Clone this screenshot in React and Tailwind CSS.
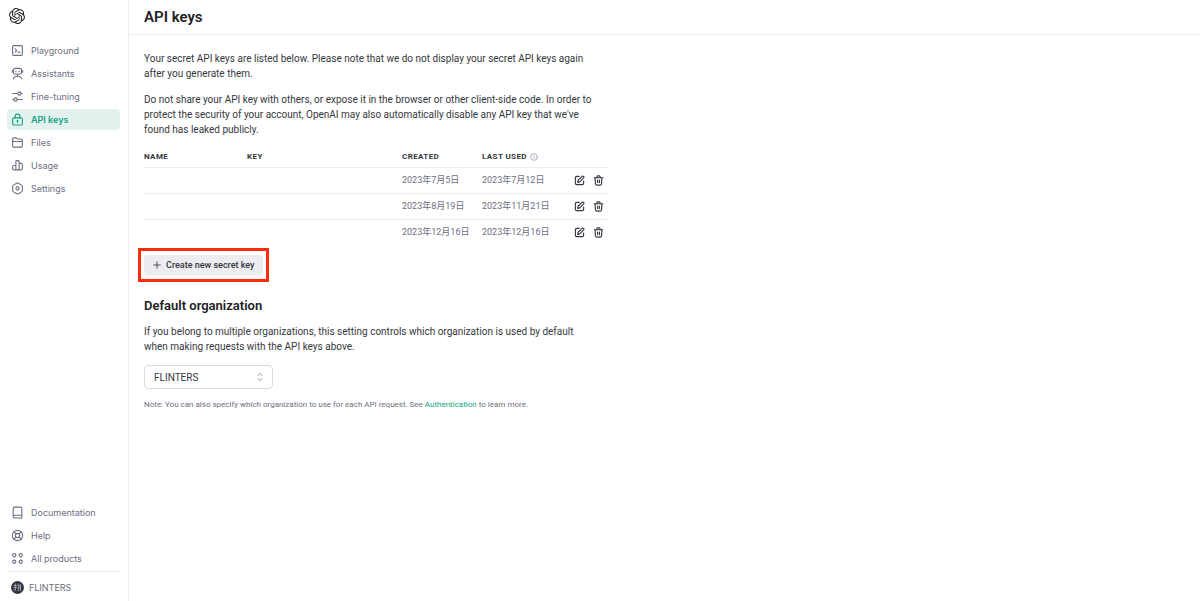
import React from "react";
import { SiOpenai } from "react-icons/si";

function Icon({ children, className = "size-[13px]" }) {
  return (
    <svg
      viewBox="0 0 24 24"
      fill="none"
      stroke="currentColor"
      strokeWidth="2"
      strokeLinecap="round"
      strokeLinejoin="round"
      aria-hidden="true"
      className={`shrink-0 ${className}`}
    >
      {children}
    </svg>
  );
}

const mainLinks = [
  {
    label: "Playground",
    icon: (
      <>
        <rect x="3" y="3" width="18" height="18" rx="2" />
        <path d="M7.500 9l3 3-3 3M13 15h3.500" />
      </>
    ),
  },
  {
    label: "Assistants",
    icon: (
      <>
        <rect x="4.500" y="2.500" width="15" height="11" rx="3.500" />
        <path d="M2.500 6.500v3M21.500 6.500v3M9 7.500v1.500M15 7.500v1.500M12 13.500v3.500M4.500 21.500c1-3 4-4.500 7.500-4.500s6.500 1.500 7.500 4.500" />
      </>
    ),
  },
  {
    label: "Fine-tuning",
    icon: (
      <>
        <path d="M3 6.500h9M19 6.500h2M3 17.500h2M12 17.500h9" />
        <circle cx="15.500" cy="6.500" r="3" />
        <circle cx="8.500" cy="17.500" r="3" />
      </>
    ),
  },
  {
    label: "API keys",
    active: true,
    icon: (
      <>
        <rect x="3" y="9" width="18" height="13" rx="2.500" />
        <path d="M7.500 9V6.500a4.500 4.500 0 0 1 9 0V9M12 14v3.500" />
        <circle cx="12" cy="14.300" r="0.800" />
      </>
    ),
  },
  {
    label: "Files",
    icon: (
      <path d="M3 10h18M3 5.500v13a2 2 0 0 0 2 2h14a2 2 0 0 0 2-2v-11a2 2 0 0 0-2-2h-7L9.500 3.500H5a2 2 0 0 0-2 2z" />
    ),
  },
  {
    label: "Usage",
    icon: (
      <path d="M9 20V4.500A1.500 1.500 0 0 1 10.500 3h3A1.500 1.500 0 0 1 15 4.500V20M9 12H5.500A2.500 2.500 0 0 0 3 14.500v3A2.500 2.500 0 0 0 5.500 20h13a2.500 2.500 0 0 0 2.500-2.500v-7A2.500 2.500 0 0 0 18.500 8H15" />
    ),
  },
  {
    label: "Settings",
    icon: (
      <>
        <path d="M10.500 2.400a3 3 0 0 1 3 0l6 3.400A3 3 0 0 1 21 8.400v7.200a3 3 0 0 1-1.500 2.600l-6 3.400a3 3 0 0 1-3 0l-6-3.400A3 3 0 0 1 3 15.600V8.400a3 3 0 0 1 1.500-2.600z" />
        <circle cx="12" cy="12" r="3" />
      </>
    ),
  },
];

const footerLinks = [
  {
    label: "Documentation",
    icon: (
      <path d="M20 17V4a2 2 0 0 0-2-2H6.500A2.500 2.500 0 0 0 4 4.500v15M20 17H6.500a2.500 2.500 0 0 0 0 5H20zM20 22v-5" />
    ),
  },
  {
    label: "Help",
    icon: (
      <>
        <circle cx="12" cy="12" r="9.500" />
        <circle cx="12" cy="12" r="4" />
        <path d="M5.300 5.300l3.900 3.900M14.800 14.800l3.900 3.900M18.700 5.300l-3.900 3.900M9.200 14.800l-3.900 3.900" />
      </>
    ),
  },
  {
    label: "All products",
    icon: (
      <>
        <circle cx="6" cy="6" r="3" />
        <circle cx="18" cy="6" r="3" />
        <circle cx="6" cy="18" r="3" />
        <circle cx="18" cy="18" r="3" />
      </>
    ),
  },
];

function NavList({ items }) {
  return (
    <ul className="flex flex-col gap-[2px]">
      {items.map((item) => (
        <li key={item.label}>
          <a
            href="#"
            aria-current={item.active ? "page" : undefined}
            className={`flex h-[21px] items-center gap-[7px] rounded pl-1 ${
              item.active
                ? "bg-[#e4f2ef] font-semibold text-[#10a37f]"
                : "text-[#6e6e80]"
            }`}
          >
            <Icon>{item.icon}</Icon>
            {item.label}
          </a>
        </li>
      ))}
    </ul>
  );
}

const keys = [
  { created: "2023年7月5日", used: "2023年7月12日" },
  { created: "2023年8月19日", used: "2023年11月21日" },
  { created: "2023年12月16日", used: "2023年12月16日" },
];

function KeyTable() {
  return (
    <table className="mt-[10px] w-full table-fixed border-collapse text-left">
      <colgroup>
        <col className="w-[103px]" />
        <col className="w-[155px]" />
        <col className="w-[80px]" />
        <col className="w-[76px]" />
        <col />
      </colgroup>
      <thead>
        <tr className="h-5 border-b border-[#ececf1] text-[8px] tracking-wider whitespace-nowrap text-[#353740]">
          <th className="font-bold">NAME</th>
          <th className="font-bold">KEY</th>
          <th className="font-bold">CREATED</th>
          <th className="font-bold">
            <span className="flex items-center gap-[3px]">
              LAST USED
              <Icon className="size-2 text-[#8e8ea0]">
                <circle cx="12" cy="12" r="10" />
                <path d="M12 11v6M12 7v.5" />
              </Icon>
            </span>
          </th>
          <th aria-label="Actions" />
        </tr>
      </thead>
      <tbody className="text-[9px] whitespace-nowrap text-[#6e6e80]">
        {keys.map((key) => (
          <tr
            key={key.created}
            className="h-[26px] border-b border-[#ececf1] last:border-b-0"
          >
            <td />
            <td />
            <td>{key.created}</td>
            <td>{key.used}</td>
            <td>
              <div className="flex justify-end gap-2 pr-1 text-[#353740]">
                <button type="button" aria-label="Edit key">
                  <Icon className="size-[11px]">
                    <path
                      strokeWidth="2.500"
                      d="M11 3H6a3 3 0 0 0-3 3v12a3 3 0 0 0 3 3h12a3 3 0 0 0 3-3v-5M17.600 2.900a2.500 2.500 0 0 1 3.500 3.500L12.500 15 8 16l1-4.500z"
                    />
                  </Icon>
                </button>
                <button type="button" aria-label="Delete key">
                  <Icon className="size-[11px]">
                    <path
                      strokeWidth="2.500"
                      d="M2.500 6h19M8 6l.7-2.500A2 2 0 0 1 10.600 2h2.800a2 2 0 0 1 1.900 1.500L16 6M4.500 6l.8 13.200A3 3 0 0 0 8.300 22h7.400a3 3 0 0 0 3-2.800L19.500 6M10 11v5.500M14 11v5.500"
                    />
                  </Icon>
                </button>
              </div>
            </td>
          </tr>
        ))}
      </tbody>
    </table>
  );
}

export default function App() {
  return (
    <div className="flex min-h-screen bg-white font-['Roboto','Noto_Sans_CJK_JP',sans-serif] text-[#353740]">
      <aside className="flex w-[129px] shrink-0 flex-col border-r border-[#ececf1] pt-2 pr-2 pb-1 pl-[7px] font-['Inter',sans-serif] text-[9px]">
        <a href="#" aria-label="OpenAI" className="ml-[2px] self-start text-[#202123]">
          <SiOpenai className="size-4" />
        </a>
        <nav aria-label="Main" className="mt-4">
          <NavList items={mainLinks} />
        </nav>
        <nav aria-label="Resources" className="mt-auto border-b border-[#ececf1] pb-[2px]">
          <NavList items={footerLinks} />
        </nav>
        <button
          type="button"
          className="mt-[6px] flex h-[19px] items-center gap-[5px] pl-1 text-[#6e6e80]"
        >
          <svg viewBox="0 0 24 24" className="size-[13px]" aria-hidden="true">
            <circle cx="12" cy="12" r="12" fill="#353740" />
            <path
              d="M5 8h6M5 12h6M8 5v13M5.500 15.500v2M13.500 5v14M17.500 6v12M13.500 9h5M13.500 13h5"
              stroke="#c5c5d2"
              strokeWidth="1.300"
              fill="none"
            />
          </svg>
          FLINTERS
        </button>
      </aside>

      <div className="min-w-0 flex-1">
        <header className="flex h-[35px] items-center border-b border-[#ececf1] px-[15px]">
          <h1 className="text-[15px] font-semibold text-[#202123]">API keys</h1>
        </header>
        <main className="max-w-[494px] px-[15px] pt-4 text-[10px] leading-[15px]">
          <p className="max-w-[455px]">
            Your secret API keys are listed below. Please note that we do not
            display your secret API keys again after you generate them.
          </p>
          <p className="mt-[11px] max-w-[455px]">
            Do not share your API key with others, or expose it in the browser
            or other client-side code. In order to protect the security of your
            account, OpenAI may also automatically disable any API key that
            we've found has leaked publicly.
          </p>
          <KeyTable />
          <div className="mt-[3px] -ml-[6px] w-fit border-[3px] border-[#fb2c0a] px-[3px] py-1">
            <button
              type="button"
              className="flex h-5 items-center gap-1 rounded bg-[#ececf1] px-2 text-[9px] font-medium"
            >
              <Icon className="size-[10px]">
                <path d="M12 4v16M4 12h16" />
              </Icon>
              Create new secret key
            </button>
          </div>
          <h2 className="mt-4 text-[13px] font-semibold text-[#202123]">
            Default organization
          </h2>
          <p className="mt-[11px] max-w-[455px]">
            If you belong to multiple organizations, this setting controls which
            organization is used by default when making requests with the API
            keys above.
          </p>
          <div className="relative mt-[11px] w-[129px]">
            <select
              aria-label="Default organization"
              className="block h-6 w-full appearance-none rounded border border-[#d9d9e3] bg-white px-[9px]"
            >
              <option>FLINTERS</option>
            </select>
            <Icon className="pointer-events-none absolute top-[7px] right-2 size-[10px] text-[#8e8ea0]">
              <path d="M7 9l5-6 5 6M7 15l5 6 5-6" />
            </Icon>
          </div>
          <p className="mt-2 text-[8px] text-[#6e6e80]">
            Note: You can also specify which organization to use for each API
            request. See{" "}
            <a href="#" className="text-[#10a37f]">
              Authentication
            </a>{" "}
            to learn more.
          </p>
        </main>
      </div>
    </div>
  );
}
